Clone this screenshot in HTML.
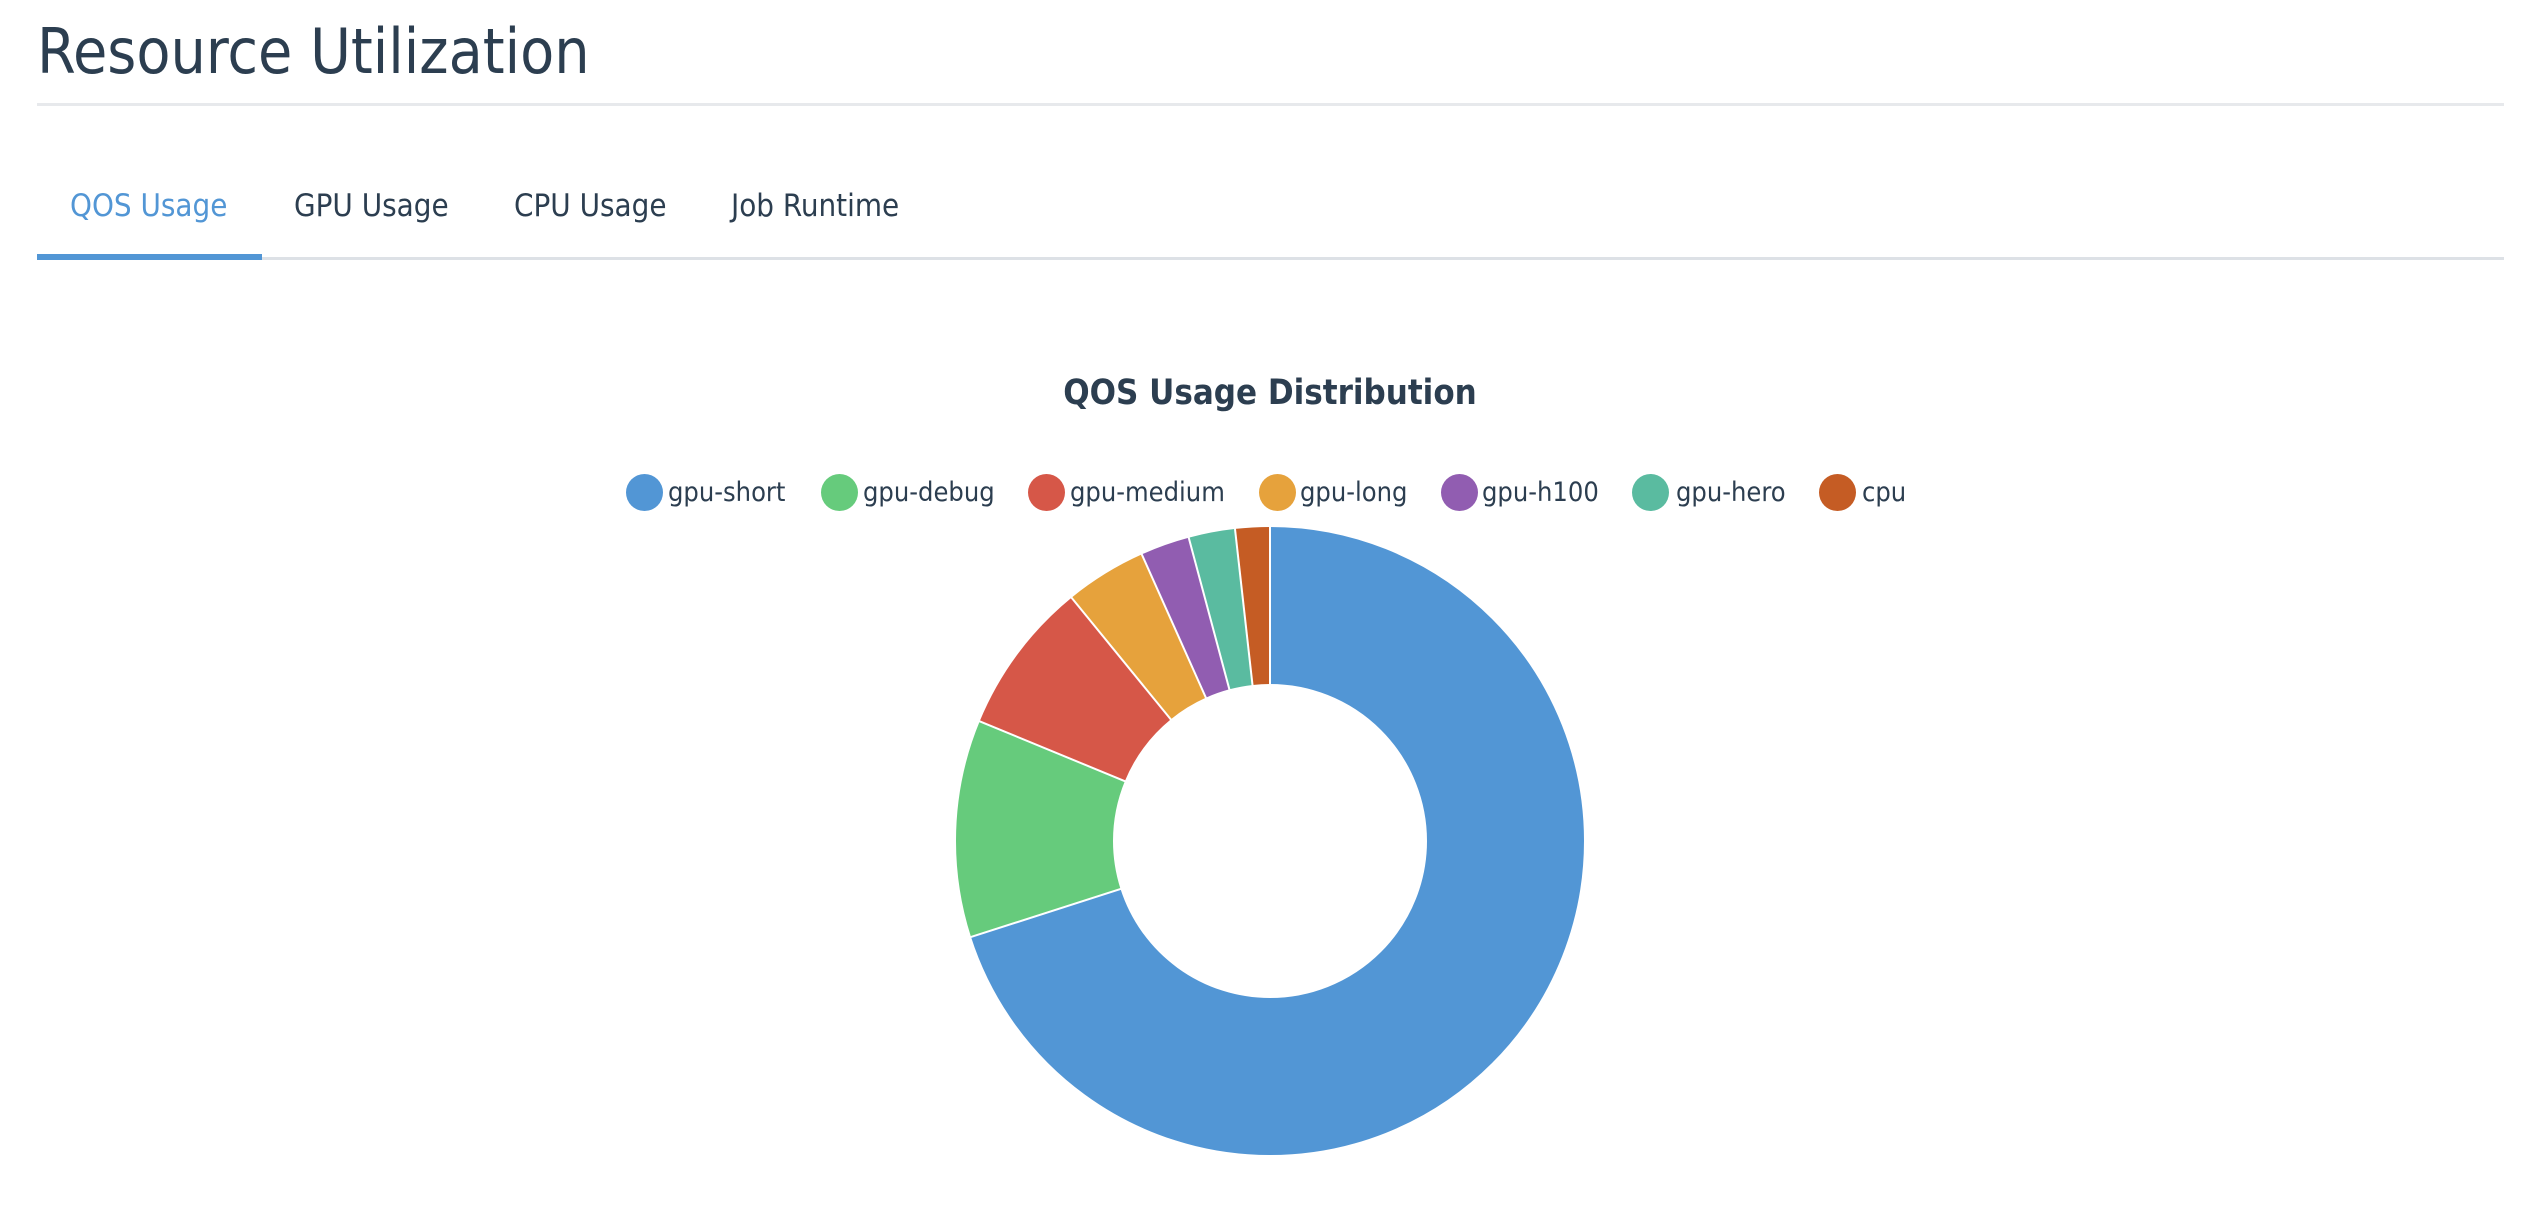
<!DOCTYPE html>
<html><head><meta charset="utf-8"><style>
html,body{margin:0;padding:0;background:#fff;width:2548px;height:1208px;overflow:hidden;position:relative}
*{font-family:"DejaVu Sans Condensed","DejaVu Sans",sans-serif;font-stretch:condensed}
.a{position:absolute;white-space:nowrap}
h1{position:absolute;left:37px;top:7px;margin:0;font-weight:normal;font-size:62px;color:#2c3e50;line-height:90px}
.tab{font-size:31px;color:#2c3e50;top:186px;line-height:40px}
.lg{font-size:27px;color:#2c3e50;top:474px;line-height:38px}
.dot{position:absolute;width:37px;height:37px;border-radius:50%;top:474px}
</style></head><body>
<h1>Resource Utilization</h1>
<div class="a" style="left:37px;top:103px;width:2467px;height:3px;background:#e7e9ec"></div>
<div class="a tab" style="left:70px;color:#5296d5">QOS Usage</div>
<div class="a tab" style="left:294px">GPU Usage</div>
<div class="a tab" style="left:514px">CPU Usage</div>
<div class="a tab" style="left:731px">Job Runtime</div>
<div class="a" style="left:37px;top:257px;width:2467px;height:3px;background:#dde1e6"></div>
<div class="a" style="left:37px;top:254px;width:225px;height:6px;background:#5296d5"></div>
<div class="a" style="left:0;width:2540px;text-align:center;top:372px;font-size:34.5px;font-weight:bold;color:#2c3e50;line-height:42px">QOS Usage Distribution</div>
<div class="dot" style="left:626px;background:#5296d5"></div><div class="a lg" style="left:668px">gpu-short</div>
<div class="dot" style="left:821px;background:#66cb7c"></div><div class="a lg" style="left:863px">gpu-debug</div>
<div class="dot" style="left:1028px;background:#d65748"></div><div class="a lg" style="left:1070px">gpu-medium</div>
<div class="dot" style="left:1259px;background:#e6a23c"></div><div class="a lg" style="left:1300px">gpu-long</div>
<div class="dot" style="left:1441px;background:#915db1"></div><div class="a lg" style="left:1482px">gpu-h100</div>
<div class="dot" style="left:1632px;background:#5abba0"></div><div class="a lg" style="left:1676px">gpu-hero</div>
<div class="dot" style="left:1819px;background:#c55c24"></div><div class="a lg" style="left:1862px">cpu</div>
<svg class="a" style="left:0;top:0" width="2548" height="1208">
<g transform="rotate(-90 1270 841)" fill="none" stroke-width="157">
<circle cx="1270" cy="841" r="235.5" stroke="#5296d5" stroke-dasharray="1036.6 2000"/>
<circle cx="1270" cy="841" r="235.5" stroke="#66cb7c" stroke-dasharray="0 1036.6 165.3 2000"/>
<circle cx="1270" cy="841" r="235.5" stroke="#d65748" stroke-dasharray="0 1201.9 116.7 2000"/>
<circle cx="1270" cy="841" r="235.5" stroke="#e6a23c" stroke-dasharray="0 1318.6 62 2000"/>
<circle cx="1270" cy="841" r="235.5" stroke="#915db1" stroke-dasharray="0 1380.6 37.4 2000"/>
<circle cx="1270" cy="841" r="235.5" stroke="#5abba0" stroke-dasharray="0 1418 35.3 2000"/>
<circle cx="1270" cy="841" r="235.5" stroke="#c55c24" stroke-dasharray="0 1453.3 26.4 2000"/>
</g>
<g stroke="#fff" stroke-width="2">
<line x1="1270" y1="685" x2="1270" y2="525"/>
<line x1="1270" y1="685" x2="1270" y2="525" transform="rotate(252.2 1270 841)"/>
<line x1="1270" y1="685" x2="1270" y2="525" transform="rotate(292.4 1270 841)"/>
<line x1="1270" y1="685" x2="1270" y2="525" transform="rotate(320.8 1270 841)"/>
<line x1="1270" y1="685" x2="1270" y2="525" transform="rotate(335.9 1270 841)"/>
<line x1="1270" y1="685" x2="1270" y2="525" transform="rotate(345 1270 841)"/>
<line x1="1270" y1="685" x2="1270" y2="525" transform="rotate(353.6 1270 841)"/>
</g>
</svg>
</body></html>
